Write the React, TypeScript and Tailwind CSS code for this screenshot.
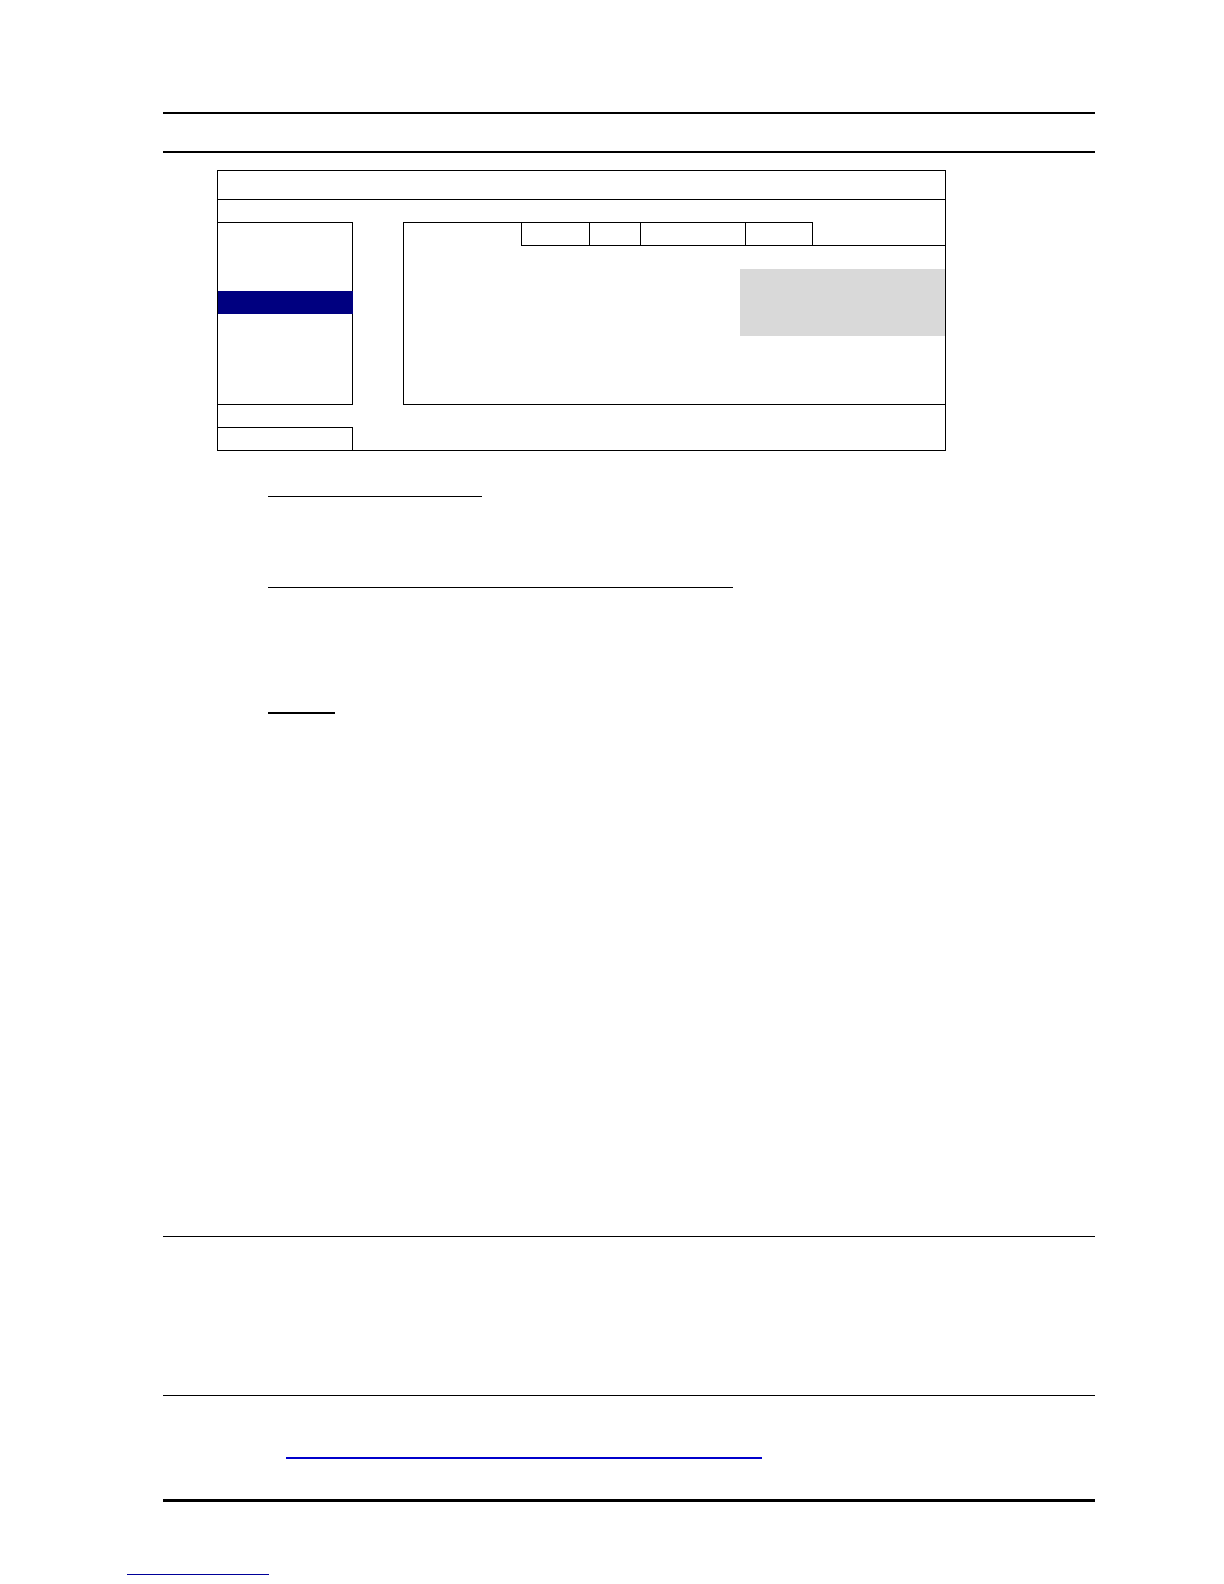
import React from 'react';

// Menu dialog mock: everything is drawn with borders only, the page carries no visible text.
const tabs = [68, 51, 105, 67];

const DialogMock: React.FC = () => {
  return (
    <div className="ml-[54px] mt-[17px] w-[729px] border border-black flex flex-col">
      {/* title bar */}
      <div className="h-[29px] border-b border-black" />
      <div className="h-[22px]" />

      {/* body: side menu + tabbed panel */}
      <div className="flex h-[183px]">
        <div className="w-[135px] border-t border-r border-b border-black flex flex-col">
          <div className="h-[68px]" />
          <div className="h-[23px] bg-[#000080] -mr-px" />
        </div>
        <div className="w-[50px]" />
        <div className="flex-1 border-l border-b border-black flex flex-col">
          <div className="flex h-[24px]">
            <div className="w-[117px] border-t border-black" />
            {tabs.map((w, i) => (
              <div
                key={i}
                className="border-l border-t border-b border-black"
                style={{ width: w }}
              />
            ))}
            <div className="flex-1 border-l border-b border-black" />
          </div>
          <div className="flex pt-[23px]">
            <div className="ml-auto w-[205px] h-[67px] bg-[#d9d9d9]" />
          </div>
        </div>
      </div>

      <div className="h-[22px]" />
      <div className="w-[135px] h-[23px] border-t border-r border-black" />
    </div>
  );
};

export default function App() {
  return (
    <div className="w-[1224px] h-[1584px] bg-white flex flex-col font-['Liberation_Sans',sans-serif]">
      <div className="ml-[163px] w-[932px] flex flex-col pt-[112px]">
        <div className="h-[2px] bg-black" />
        <div className="h-[37px]" />
        <div className="h-[2px] bg-black" />

        <DialogMock />

        <div className="ml-[105px] mt-[45px] w-[214px] h-px bg-black" />
        <div className="ml-[105px] mt-[90px] w-[465px] h-px bg-black" />
        <div className="ml-[105px] mt-[124px] w-[67px] h-[2px] bg-black" />

        <div className="mt-[522px] h-px bg-black" />
        <div className="mt-[158px] h-px bg-black" />

        <div className="ml-[123px] mt-[61px] w-[476px] h-[2px] bg-[#0000cc]" />
        <div className="mt-[40px] h-[3px] bg-black" />
      </div>
      <div className="ml-[127px] mt-[72px] w-[142px] h-px bg-[#000099]" />
    </div>
  );
}
